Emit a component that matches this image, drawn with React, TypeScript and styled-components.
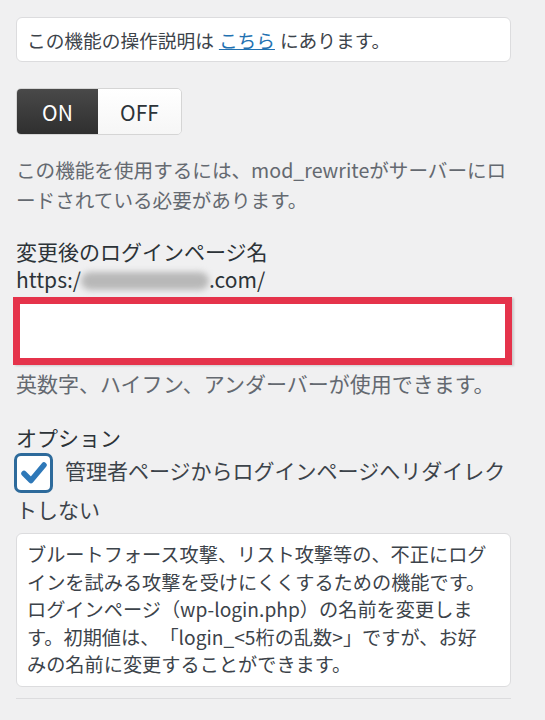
import React from 'react';
import styled, { createGlobalStyle } from 'styled-components';

const GlobalStyle = createGlobalStyle`
  html, body {
    margin: 0;
    padding: 0;
    background: #f0f0f1;
  }
  body {
    font-family: 'Noto Sans CJK JP', 'Noto Sans', sans-serif;
    color: #3c434a;
    text-spacing-trim: space-all;
  }
`;

const Page = styled.div`
  width: 495px;
  padding: 17px 34px 20px 16px;
  font-size: 21px;
`;

const NoticeBox = styled.div`
  box-sizing: border-box;
  height: 45px;
  padding: 0 10px;
  display: flex;
  align-items: center;
  background: #fff;
  border: 1px solid #dcdcde;
  border-radius: 6px;
  color: #3c434a;
  font-size: 18.7px;
  line-height: 28px;
`;

const Link = styled.a`
  color: #2271b1;
  text-decoration: underline;
  margin: 0 5px;
`;

const Toggle = styled.div`
  display: inline-flex;
  margin-top: 26px;
  height: 47px;
  border: 1px solid #d5d5d5;
  border-radius: 5px;
  overflow: hidden;
  box-sizing: border-box;
`;

const ToggleButton = styled.div<{ $active?: boolean; $w: number }>`
  width: ${(p) => p.$w}px;
  display: flex;
  align-items: center;
  justify-content: center;
  font-size: 21px;
  color: ${(p) => (p.$active ? '#fff' : '#2c3338')};
  background: ${(p) =>
    p.$active
      ? 'linear-gradient(#494949, #2f2f2f)'
      : 'linear-gradient(#ffffff, #f6f6f6)'};
`;

const Para = styled.p<{ $top: number; $lh: number; $size: number }>`
  margin: ${(p) => p.$top}px 0 0;
  font-size: ${(p) => p.$size}px;
  line-height: ${(p) => p.$lh}px;
  color: #646970;
`;

const Heading = styled.div`
  margin-top: 22px;
  line-height: 28px;
  color: #2c3338;
`;

const Url = styled.div`
  line-height: 28px;
  color: #2c3338;
`;

const Blur = styled.span`
  display: inline-block;
  width: 128px;
  height: 18px;
  vertical-align: -2px;
  background: #b8b8b8;
  border-radius: 9px;
  filter: blur(3px);
`;

const RedInput = styled.div`
  box-sizing: border-box;
  margin: 4px 0 0 -3px;
  width: 499px;
  height: 68px;
  background: #fff;
  border: 7px solid #e5334b;
  box-shadow: 2px 1px 2px rgba(0, 0, 0, 0.15);
`;

const Label = styled.div`
  margin-top: 26px;
  line-height: 28px;
  color: #2c3338;
`;

const CheckRow = styled.div`
  line-height: 28px;
  color: #3c434a;
`;

const CheckBox = styled.span`
  display: inline-flex;
  align-items: center;
  justify-content: center;
  box-sizing: border-box;
  width: 39px;
  height: 40px;
  margin: 2px 12px 2px -2px;
  vertical-align: middle;
  background: #fff;
  border: 3px solid #2d6a9b;
  border-radius: 7px;
`;

const DescBox = styled.div`
  margin-top: 10px;
  padding: 7px 17px 7px 10px;
  background: #fff;
  border: 1px solid #dcdcde;
  border-radius: 6px;
  font-size: 19.2px;
  line-height: 27.5px;
  color: #3c434a;
`;

const Divider = styled.hr`
  margin: 11px 0 0;
  border: 0;
  border-top: 1px solid #dcdcde;
`;

export default function App() {
  return (
    <Page>
      <GlobalStyle />
      <NoticeBox>
        この機能の操作説明は<Link href="#">こちら</Link>にあります。
      </NoticeBox>
      <Toggle>
        <ToggleButton $active $w={81}>ON</ToggleButton>
        <ToggleButton $w={83}>OFF</ToggleButton>
      </Toggle>
      <Para $top={20} $lh={30} $size={19.6}>
        この機能を使用するには、mod_rewriteがサーバーにロードされている必要があります。
      </Para>
      <Heading>変更後のログインページ名</Heading>
      <Url>
        https:/<Blur />.com/
      </Url>
      <RedInput />
      <Para $top={4} $lh={28} $size={21}>
        英数字、ハイフン、アンダーバーが使用できます。
      </Para>
      <Label>オプション</Label>
      <CheckRow>
        <CheckBox>
          <svg width="28" height="26" viewBox="0 0 28 26">
            <path
              d="M4 13.5 L11 20.5 L24 5"
              fill="none"
              stroke="#2e78b8"
              strokeWidth="5.5"
              strokeLinecap="round"
              strokeLinejoin="round"
            />
          </svg>
        </CheckBox>
        管理者ページからログインページへリダイレクトしない
      </CheckRow>
      <DescBox>
        ブルートフォース攻撃、リスト攻撃等の、不正にログインを試みる攻撃を受けにくくするための機能です。ログインページ（wp-login.php）の名前を変更します。初期値は、「login_&lt;5桁の乱数&gt;」ですが、お好みの名前に変更することができます。
      </DescBox>
      <Divider />
    </Page>
  );
}
